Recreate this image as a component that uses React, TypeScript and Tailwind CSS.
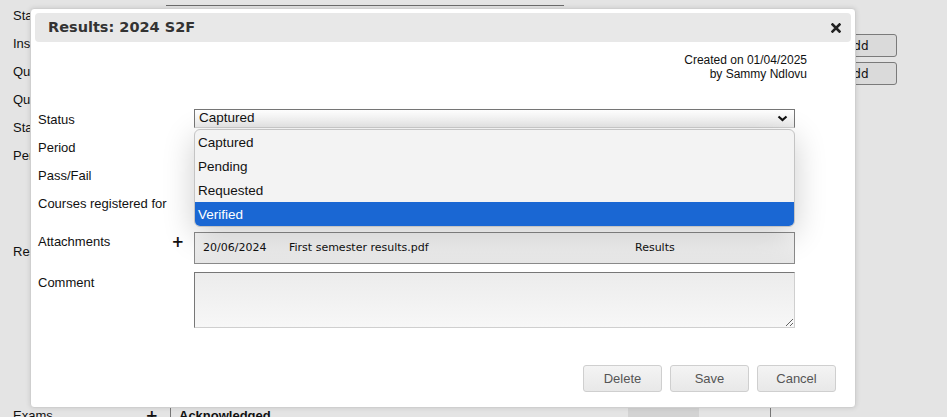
import React from 'react'

const sans = "font-['Liberation_Sans',Arial,sans-serif]"
const verdana = "font-['DejaVu_Sans',Verdana,sans-serif]"

const pageRows = ['Status', 'Institution', 'Qualification', 'Qualification type', 'Start date', 'Period']
const options = ['Captured', 'Pending', 'Requested', 'Verified']

function Chevron() {
  return (
    <svg width="11" height="7" viewBox="0 0 11 7" className="mr-[6px]">
      <polyline points="1.5,1.5 5.5,5 9.5,1.5" fill="none" stroke="#111" strokeWidth="2.2" />
    </svg>
  )
}

function CloseIcon() {
  return (
    <svg width="10" height="10" viewBox="0 0 10 10">
      <path d="M1.5 1.5 L8.5 8.5 M8.5 1.5 L1.5 8.5" stroke="#222" strokeWidth="2.6" strokeLinecap="square" />
    </svg>
  )
}

function Plus() {
  return <span className={`${verdana} text-[15px] font-bold leading-none text-[#111]`}>+</span>
}

export default function App() {
  return (
    <div className={`relative h-[417px] w-[947px] overflow-hidden bg-[#e4e4e4] text-[13px] text-[#111] ${sans}`}>
      {/* page behind the dialog */}
      <div className="ml-[166px] h-[6px] w-[398px] border-b border-[#6c6c6c]" />
      <div className="mt-[-4px] w-[897px] pl-[13px]">
        {pageRows.map((r, i) => (
          <div key={r} className="flex h-[28px] items-start justify-between">
            <span className="leading-[28px]">{r}</span>
            {(i === 1 || i === 2) && (
              <button className={`${verdana} mt-[4px] h-[23px] w-[80px] rounded-[3px] border border-[#7a7a7a] bg-[#dadada] text-[12px]`}>
                Add
              </button>
            )}
          </div>
        ))}
        <div className="h-[68px]" />
        <div className="h-[28px] leading-[28px]">Results</div>
        <div className="h-[136px]" />
        <div className="flex h-[28px] items-start">
          <div className="flex w-[157px] items-center justify-between pr-[12px] leading-[28px]">
            <span>Exams</span>
            <Plus />
          </div>
          <div className="flex h-[28px] flex-1 border-l border-[#777]">
            <span className="ml-[8px] w-[449px] font-bold leading-[28px]">Acknowledged</span>
            <div className="h-[28px] w-[71px] bg-[#d3d3d3]" />
            <div className="h-[28px] w-[72px] border-r border-[#777]" />
          </div>
        </div>
      </div>

      {/* dialog */}
      <div className="absolute left-[30px] top-[8px] flex h-[400px] w-[826px] flex-col rounded-[4px] border border-[#cfcfcf] bg-white p-[4px] shadow-[0_0_5px_rgba(0,0,0,0.12)]">
        <div className="flex h-[29px] shrink-0 items-center justify-between rounded-[4px] bg-[#e8e8e8] pl-[13px] pr-[10px]">
          <span className={`${verdana} text-[14.5px] font-bold text-[#333]`}>Results: 2024 S2F</span>
          <CloseIcon />
        </div>

        <div className="mr-[44px] mt-[11px] text-right text-[12px] leading-[14px]">
          <div>Created on 01/04/2025</div>
          <div>by Sammy Ndlovu</div>
        </div>

        <div className="ml-[3px] mt-[28px] w-[757px]">
          {/* Status */}
          <div className="relative flex h-[28px] items-start">
            <span className="w-[156px] leading-[22px]">Status</span>
            <div className="flex h-[19px] flex-1 items-center justify-between border border-[#767676] border-b-[#d0d0d0] bg-gradient-to-b from-white to-[#ececec] pl-[4px] text-[13.5px]">
              <span>Captured</span>
              <Chevron />
            </div>
            <div className="absolute left-[156px] top-[20px] w-[601px] overflow-hidden rounded-[6px] border border-[#c4c4c4] bg-[#f3f3f3] shadow-[0_8px_32px_rgba(0,0,0,0.2)]">
              {options.map((o) => (
                <div
                  key={o}
                  className={`h-[24px] px-[3px] text-[13.5px] leading-[26px] ${o === 'Verified' ? 'bg-[#1a67d3] text-white' : ''}`}
                >
                  {o}
                </div>
              ))}
            </div>
          </div>
          <div className="h-[28px] leading-[22px]">Period</div>
          <div className="h-[28px] leading-[22px]">Pass/Fail</div>
          <div className="h-[39px] leading-[22px]">Courses registered for</div>

          {/* Attachments */}
          <div className="flex h-[40px] items-start">
            <div className="flex w-[156px] items-center justify-between pr-[10px] leading-[20px]">
              <span>Attachments</span>
              <Plus />
            </div>
            <div className={`${verdana} flex h-[32px] flex-1 items-center border border-[#8a8a8a] bg-gradient-to-b from-[#f7f7f7] to-[#e6e6e6] pl-[8px] text-[11px]`}>
              <span className="w-[86px]">20/06/2024</span>
              <span className="w-[346px]">First semester results.pdf</span>
              <span>Results</span>
            </div>
          </div>

          {/* Comment */}
          <div className="flex items-start">
            <span className="w-[156px] leading-[22px]">Comment</span>
            <textarea
              readOnly
              className="h-[56px] flex-1 border border-[#777] border-b-[#cfcfcf] border-r-[#cfcfcf] bg-gradient-to-b from-[#ececec] to-[#f7f7f7] outline-none"
            />
          </div>
        </div>

        <div className="mr-[15px] mt-[37px] flex justify-end gap-[8px]">
          {['Delete', 'Save', 'Cancel'].map((b) => (
            <button
              key={b}
              className="h-[27px] w-[79px] rounded-[3px] border border-[#cfcfcf] bg-gradient-to-b from-[#f4f4f4] to-[#e8e8e8] text-[13px] text-[#555]"
            >
              {b}
            </button>
          ))}
        </div>
      </div>
    </div>
  )
}
